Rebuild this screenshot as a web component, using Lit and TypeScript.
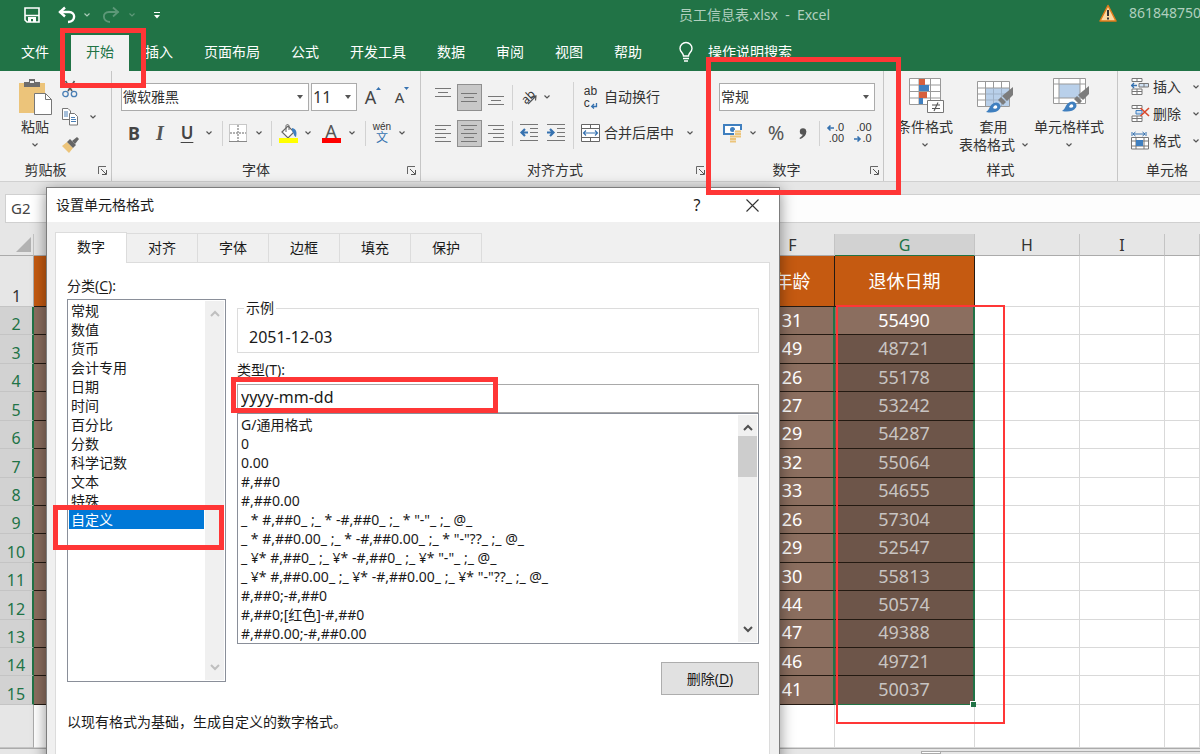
import { LitElement, html, svg, css, nothing } from "lit";
import { customElement, property, state } from "lit/decorators.js";
import { classMap } from "lit/directives/class-map.js";

const base = css`
  * { box-sizing: border-box; }
  button, select, input {
    font: inherit; color: inherit; margin: 0; padding: 0; border: 0;
    background: none; border-radius: 0; appearance: none; outline: none;
  }
  svg { display: block; flex: none; overflow: visible; }
`;

const icon = (w: number, h: number, body: unknown) =>
  html`<svg width=${w} height=${h} viewBox="0 0 ${w} ${h}" fill="none" aria-hidden="true">${body}</svg>`;

const chevron = (color = "#555") =>
  icon(6, 4, svg`<path d="M.5 .5L3 3L5.5 .5" stroke=${color} stroke-width="1.2"/>`);

const lines = (rows: number[][], h: number) =>
  icon(17, h, rows.map(([x, y, w]) => svg`<path d="M${x} ${y}.5h${w}" stroke="#777"/>`));

const brushStroke = svg`
  <path d="M36 9V17L30 23L25 18Z" fill="#7c7c7c"/>
  <path d="M24 19L29 24L26 27L21 22Z" fill="#7c7c7c"/>
  <path d="M9 34C13 32 12 27 17 25C21 23 25 27 23 30.500C20 35 14 35 9 34Z" fill="#3f7fbf"/>
  <path d="M17 28C19 26 21 28 20 30C19 31 17 31 16 30" fill="#fff"/>`;

const icons = {
  save: icon(16, 16, svg`<path d="M1 1H15V15H3L1 13Z" stroke="#fff" stroke-width="1.6"/><path d="M1 8.500H15" stroke="#fff" stroke-width="1.500"/><path d="M4 15V10H12V15H9V12H7V15Z" fill="#fff"/>`),
  undo: icon(18, 17, svg`<path d="M1.500 5H11C18 5 18 14.500 10 15" stroke="#fff" stroke-width="2.4"/><path d="M7 .5L2 5L7 9.500" stroke="#fff" stroke-width="2.4"/>`),
  redo: icon(18, 17, svg`<g stroke="#5d9878" stroke-width="1.800"><path d="M16.500 5H7C0 5 0 14.500 8 15"/><path d="M11 .5L16 5L11 9.500"/></g>`),
  more: icon(6, 7, svg`<path d="M0 .5H6" stroke="#fff"/><path d="M0 3H6L3 6.500Z" fill="#fff"/>`),
  warn: icon(18, 18, svg`<path d="M9 1.500L17 17H1Z" fill="#fbd9a0" stroke="#e07b1a" stroke-width="1.500" stroke-linejoin="round"/><path d="M9 6V12M9 13.500V15.500" stroke="#333" stroke-width="2"/>`),
  bulb: icon(14, 20, svg`<path d="M4.500 14C4.500 11 1 10 1 6.500A6 6 0 0 1 13 6.500C13 10 9.500 11 9.500 14Z" stroke="#fff" stroke-width="1.400"/><path d="M4 16.500H10M5 19H9" stroke="#fff" stroke-width="1.600"/>`),
  paste: icon(33, 36, svg`<path d="M0 4H26V34H0Z" fill="#ecc47a"/><path d="M5 3H10V0H16V3H21V8H5Z" fill="#6d6d6d"/><path d="M11 2H15V4H11Z" fill="#f2f2f2"/><path d="M15.500 14.500H26.500L32.500 20.500V35.500H15.500Z" fill="#fff" stroke="#777"/><path d="M26.500 14.500V20.500H32.500" stroke="#777"/>`),
  cut: icon(16, 17, svg`<path d="M3.500 0L10 10M12.500 0L6 10" stroke="#555" stroke-width="1.600"/><circle cx="3.500" cy="13" r="2.700" stroke="#4a7fb5" stroke-width="1.300"/><circle cx="12" cy="13" r="2.700" stroke="#4a7fb5" stroke-width="1.300"/>`),
  copy: icon(16, 18, svg`<path d="M.5 .5H6L8.500 3V11.500H.5Z" fill="#fff" stroke="#777"/><path d="M2 4H6M2 6H6M2 8H6" stroke="#4a7fb5"/><path d="M7.500 5.500H12.500L15.500 8.500V17H7.500Z" fill="#fff" stroke="#777"/><path d="M9 9.500H13M9 11.500H14M9 13.500H14" stroke="#4a7fb5"/>`),
  brush: icon(17, 16, svg`<path d="M0 9L5 5L11 11L7 16Z" fill="#ecc47a"/><path d="M5 5L8 2L14 8L11 11Z" fill="#666"/><path d="M10 4L15 0L17 2L13 7Z" fill="#666"/>`),
  caret: icon(6, 4, svg`<path d="M0 0H6L3 4Z" fill="#555"/>`),
  border: icon(18, 18, svg`<path d="M.5 .5H17.500V17.500H.5Z" fill="#fff" stroke="#999" stroke-dasharray="1 1"/><path d="M9 1V17M1 9H17" stroke="#999" stroke-width="1.500" stroke-dasharray="2 1"/><path d="M0 17.500H18" stroke="#888"/>`),
  fill: icon(19, 19, svg`<path d="M3 8L9 2L15 8L9 14Z" fill="#fff" stroke="#666" stroke-width="1.200"/><path d="M7 8V2C7 0 10 0 10 2V6" stroke="#666"/><path d="M13 4C18 5 18 9 17 13C15 13 15 9 13 7Z" fill="#3f7fbf"/><path d="M0 14H19V19H0Z" fill="#ff0"/>`),
  outdent: icon(18, 18, svg`<path d="M0 .5H18M10 4.500H18M10 8.500H18M10 12.500H18M0 16.500H18" stroke="#777"/><path d="M5 5L1.500 8.500L5 12M1.500 8.500H8" stroke="#3672b0" stroke-width="2.200"/>`),
  indent: icon(18, 18, svg`<path d="M0 .5H18M10 4.500H18M10 8.500H18M10 12.500H18M0 16.500H18" stroke="#777"/><path d="M3 5L6.500 8.500L3 12M6.500 8.500H0" stroke="#3672b0" stroke-width="2.200"/>`),
  merge: icon(19, 18, svg`<path d="M.5 .5H18.500V17.500H.5ZM.5 4.500H18.500M.5 13.500H18.500M9.500 .5V4.500M9.500 13.500V17.500" fill="#fff" stroke="#666"/><path d="M2.500 9H16.500M5 6.500L2.500 9L5 11.500M14 6.500L16.500 9L14 11.500" stroke="#3672b0" stroke-width="1.200"/>`),
  enter: icon(6, 6, svg`<path d="M5.500 0V3.500H1M3 1L.7 3.500L3 5.500" stroke="#3672b0" stroke-width="1.300"/>`),
  slant: icon(9, 9, svg`<path d="M0 9L8 1M3.500 1.500L8 1L7.500 5.500" stroke="#555" stroke-width="1.200"/>`),
  money: icon(19, 18, svg`<path d="M1 1H18V10H1Z" fill="#fff" stroke="#3f7fbf" stroke-width="2"/><circle cx="9.500" cy="5.500" r="2.500" fill="#3f7fbf"/><path d="M11 6H19V15H14V18H6V11H11Z" fill="#f2f2f2"/><path d="M12 7.500H18M12 10H18M12 12.500H18M7 12.500H13M7 15H13M7 17.500H13" stroke="#ecc47a" stroke-width="1.800"/>`),
  left: icon(7, 6, svg`<path d="M3.500 .5L1 3L3.500 5.500M1 3H7" stroke="#3672b0" stroke-width="1.600"/>`),
  right: icon(7, 6, svg`<path d="M3.500 .5L6 3L3.500 5.500M6 3H0" stroke="#3672b0" stroke-width="1.600"/>`),
  comma: icon(8, 11, svg`<circle cx="4" cy="3.500" r="3.200" fill="#555"/><path d="M7.200 3C7.500 7 5 9.500 1 11L.5 10C3 8.500 4.500 7 4 4Z" fill="#555"/>`),
  launcher: icon(9, 9, svg`<path d="M.5 8V.5H8" stroke="#666"/><path d="M3 3L8 8M8.500 4V8.500H4" stroke="#555"/>`),
  conditional: icon(36, 37, svg`<path d="M.5 .5H31.500V26.500H.5Z" fill="#fff"/><path d="M.5 .5H31.500V26.500H.5ZM.5 7H31.500M.5 13.500H31.500M.5 20H31.500M10 .5V26.500M21.500 .5V26.500" stroke="#999"/><path d="M10 1H16V7H10ZM10 14H18V20H10Z" fill="#d65f3d"/><path d="M10 7H20V13H10ZM10 20H14V26H10Z" fill="#3f7fbf"/><path d="M18.500 22.500H34.500V34.500H18.500Z" fill="#fff" stroke="#777"/><path d="M23 27H31M23 30.500H31M29 24.500L25 33" stroke="#555" stroke-width="1.100"/>`),
  tableFmt: icon(36, 37, svg`<path d="M.5 3.500H32.500V28.500H.5Z" fill="#fff"/><path d="M9 10H32V28H9Z" fill="#b9d0ea"/><path d="M.5 3.500H32.500V28.500H.5ZM.5 10H32.500M.5 16H8.500M.5 22H8.500M8.500 3.500V28.500M16.500 3.500V10M24.500 3.500V10" stroke="#999"/><path d="M9 16H32M9 22H32M16.500 10V28M24.500 10V28" stroke="#9fb2c8"/>${brushStroke}`),
  cellStyle: icon(36, 37, svg`<path d="M.5 .5H32.500V25.500H.5Z" fill="#fff"/><path d="M6 6H27V20H6Z" fill="#b9d0ea"/><path d="M.5 .5H32.500V25.500H.5ZM.5 6H32.500M.5 20H32.500M6 .5V25.500M27 .5V25.500" stroke="#999"/><g transform="translate(0 -1)">${brushStroke}</g>`),
  insert: icon(18, 17, svg`<path d="M1 .5H11V3.500H1ZM6 .5V3.500M1 11H11V16.500H1ZM6 11V16.500M1 13.500H11" fill="#fff" stroke="#777"/><path d="M8 5.500H17.500V9H8ZM13 5.500V9" fill="#cfe0f2" stroke="#777"/><path d="M0 7.500H6M3 5L.7 7.500L3 10" stroke="#3672b0" stroke-width="1.300"/>`),
  remove: icon(18, 17, svg`<path d="M1 .5H11V3.500H1ZM6 .5V3.500M1 11H11V16.500H1ZM6 11V16.500M1 13.500H11" fill="#fff" stroke="#777"/><path d="M5 5.500H11V9H5Z" fill="#cfe0f2" stroke="#3f7fbf"/><path d="M9.500 3L18 11M18 3L9.500 11" stroke="#d9482b" stroke-width="1.600"/>`),
  format: icon(18, 18, svg`<path d="M1 0V4M15 0V4M2 2H14M4.500 0L2 2L4.500 4M11.500 0L14 2L11.500 4" stroke="#3672b0"/><path d="M.5 5.500H17.500V17H.5ZM.5 9H17.500M.5 14H17.500M5 5.500V17M13 5.500V17" fill="#fff" stroke="#777"/><path d="M5 8H12V14H5Z" fill="#3f7fbf"/>`),
};

@customElement("excel-titlebar")
class ExcelTitlebar extends LitElement {
  @state() active = "开始";
  static styles = [base, css`
    :host { display: block; background: #217346; color: #fff; overflow: hidden; }
    .top { display: flex; align-items: center; height: 30px; padding-left: 24px; white-space: nowrap; }
    .quick { display: grid; grid-template-columns: 34px 18px 22px 26px 16px 34px; width: 655px; justify-items: center; align-items: center; }
    .quick button { display: flex; }
    .quick .save { justify-self: start; }
    .title { flex: 1; color: #b0cfbe; white-space: pre; }
    .account { display: flex; gap: 12px; align-items: center; width: 101px; height: 26px; color: #b0cfbe; align-self: start; }
    .tabs { display: flex; gap: 1px; height: 41px; padding: 5px 0 0 6px; align-items: stretch; }
    .tab { padding: 0 15px 2px; white-space: nowrap; }
    .tab.active { background: #f2f2f2; color: #217346; }
    .tab.first { margin-right: 6px; }
    .tell { display: flex; align-items: center; gap: 15px; margin-left: 21px; padding-bottom: 2px; white-space: nowrap; }
  `];
  render() {
    const tabs = ["文件", "开始", "插入", "页面布局", "公式", "开发工具", "数据", "审阅", "视图", "帮助"];
    return html`
      <div class="top">
        <div class="quick">
          <button class="save" aria-label="保存">${icons.save}</button>
          <button aria-label="撤消">${icons.undo}</button>
          <button aria-label="撤消选项">${chevron("#a9cbb8")}</button>
          <button aria-label="恢复">${icons.redo}</button>
          <button aria-label="恢复选项">${chevron("#5d9878")}</button>
          <button aria-label="自定义快速访问工具栏">${icons.more}</button>
        </div>
        <div class="title">员工信息表.xlsx  -  Excel</div>
        <div class="account">${icons.warn}<span>861848750</span></div>
      </div>
      <nav class="tabs">
        ${tabs.map((t, i) => html`<button class=${classMap({ tab: true, first: i === 0, active: t === this.active })} @click=${() => (this.active = t)}>${t}</button>`)}
        <button class="tell">${icons.bulb}<span>操作说明搜索</span></button>
      </nav>`;
  }
}

@customElement("excel-ribbon")
class ExcelRibbon extends LitElement {
  static styles = [base, css`
    :host { display: flex; height: 110px; background: #f2f2f2; color: #333; overflow: hidden; }
    button { display: flex; align-items: center; justify-content: center; white-space: nowrap; }
    .group { flex: none; display: flex; flex-direction: column; padding-top: 4px; border-right: 1px solid #c6c6c6; }
    .clip { width: 112px; } .font { width: 309px; } .align { width: 289px; } .number { width: 174px; }
    .styles { width: 234px; } .group.cells { flex: 1 0 98px; border: 0; padding-top: 2px; }
    .body { flex: 1; display: flex; }
    .foot { display: flex; align-items: center; height: 22px; }
    .foot span { flex: 1; text-align: center; }
    .foot button { width: 10px; height: 10px; margin: 0 4px 0 6px; }
    .rows { display: flex; flex-direction: column; gap: 8px; padding-top: 8px; }
    .row { display: grid; height: 28px; align-items: center; justify-items: center; }
    .sep { width: 1px; height: 25px; background: #d2d2d2; }
    .combo { display: grid; align-items: center; width: 100%; height: 28px; background: #fff; border: 1px solid #ababab; }
    .combo select, .combo svg { grid-area: 1 / 1; }
    .combo select { width: 100%; height: 26px; padding-left: 1px; color: #333; }
    .combo svg { justify-self: end; margin-right: 5px; pointer-events: none; }
    .combo.size { font-size: 16px; }
    .font .rows { padding-left: 9px; }
    .f1 { grid-template-columns: 188px 46px 28px 26px; gap: 2px; justify-content: start; }
    .f2 { grid-template-columns: 26px 26px 28px 16px 10px 22px 20px 4px 30px 10px 36px 6px 20px 14px 26px; }
    .b { font-size: 18px; font-weight: 700; color: #444; }
    .i { font-family: "Liberation Serif", serif; font-size: 20px; font-style: italic; font-weight: 700; color: #555; }
    .u { font-size: 17px; font-weight: 600; text-decoration: underline; text-decoration-thickness: 1px; color: #444; text-underline-offset: 3px; }
    .grow { font-size: 18px; color: #444; align-items: flex-start; }
    .shrink { font-size: 15px; color: #444; align-items: flex-start; }
    .colour { flex-direction: column; font-size: 18px; line-height: 14px; color: #555; width: 19px; border-bottom: 5px solid red; }
    .pinyin { flex-direction: column; font: 10px/10px "Liberation Sans", "Noto Sans CJK SC", sans-serif; }
    .pinyin b { font-size: 12px; line-height: 13px; font-weight: 400; color: #3672b0; }
    .align .rows.main { padding-left: 9px; }
    .a1 { grid-template-columns: 26px 27px 26px 7px 26px 10px; }
    .a2 { grid-template-columns: 26px 27px 26px 7px 26px 27px; }
    .on { width: 25px; height: 27px; background: #c8c8c8; border: 1px solid #8f8f8f; }
    .low { padding-top: 7px; } .high { padding-bottom: 9px; }
    .tall { width: 1px; height: 67px; margin: 7px 3px 0 4px; background: #d2d2d2; }
    .a3 { grid-template-columns: 27px 72px 28px; justify-items: start; }
    .a3 > :first-child, .a3 > :last-child { justify-self: center; }
    .wrap { flex-direction: column; align-items: flex-start; font: 12px/12px "Liberation Sans", sans-serif; }
    .wrap span { display: flex; gap: 1px; align-items: flex-end; height: 12px; }
    .orient { font-size: 12px; line-height: 12px; }
    .orient span { transform: rotate(-45deg); }
    .orient svg { margin: 4px 0 0 -7px; }
    .number .rows { padding-left: 9px; }
    .n1 { grid-template-columns: 156px; }
    .n2 { grid-template-columns: 26px 16px 30px 24px 8px 25px 30px; }
    .pct { font-size: 20px; color: #555; }
    .dec { flex-direction: column; align-items: flex-end; font: 11px/11px "Liberation Sans", sans-serif; }
    .dec span { display: flex; align-items: center; gap: 1px; }
    .styles .body { padding-left: 10px; }
    .big { flex-direction: column; justify-content: flex-start; line-height: 18px; }
    .big .pic { height: 43px; display: flex; align-items: center; }
    .styles .pic { padding-left: 3px; }
    .big .chev { height: 18px; display: flex; align-items: center; gap: 7px; }
    .w1 { width: 62px; } .w2 { width: 75px; } .w3 { width: 76px; }
    .cells .body { flex-direction: column; padding-left: 13px; }
    .cell { height: 27px; display: grid; grid-template-columns: 22px 40px 12px; justify-items: start; justify-content: start; }
    .clip .body { padding-left: 17px; }
    .paste { width: 36px; }
    .small { display: grid; grid-template-columns: 34px 12px; grid-template-rows: 28px 28px 27px; justify-items: center; align-items: center; }
    .small .brush { grid-row: 3; }
    .small .cut { grid-column: 1; }
  `];
  group(name: string, label: string, body: unknown, launcher = true) {
    return html`<section class="group ${name}">
      <div class="body">${body}</div>
      <div class="foot"><span>${label}</span>${launcher ? html`<button aria-label="${label}设置">${icons.launcher}</button>` : nothing}</div>
    </section>`;
  }
  chev(label: string) { return html`<button aria-label="${label}选项">${chevron()}</button>`; }
  render() {
    const sep = html`<i class="sep"></i>`;
    return html`
      ${this.group("clip", "剪贴板", html`
        <button class="big paste"><span class="pic">${icons.paste}</span><span>粘贴</span><span class="chev">${chevron()}</span></button>
        <div class="small">
          <button class="cut" aria-label="剪切">${icons.cut}</button><span></span>
          <button aria-label="复制">${icons.copy}</button>${this.chev("复制")}
          <button class="brush" aria-label="格式刷">${icons.brush}</button>
        </div>`)}
      ${this.group("font", "字体", html`<div class="rows">
        <div class="row f1">
          <label class="combo"><select aria-label="字体"><option>微软雅黑</option></select>${icons.caret}</label>
          <label class="combo size"><select aria-label="字号"><option>11</option></select>${icons.caret}</label>
          <button class="grow" aria-label="增大字号">A${icon(5, 3, svg`<path d="M0 3H5L2.500 0Z" fill="#3672b0"/>`)}</button>
          <button class="shrink" aria-label="减小字号">A${icon(5, 3, svg`<path d="M0 0H5L2.500 3Z" fill="#3672b0"/>`)}</button>
        </div>
        <div class="row f2">
          <button class="b">B</button><button class="i">I</button><button class="u">U</button>${this.chev("下划线")}${sep}
          <button aria-label="边框">${icons.border}</button>${this.chev("边框")}${sep}
          <button aria-label="填充颜色">${icons.fill}</button>${this.chev("填充")}
          <button class="colour" aria-label="字体颜色">A</button>${this.chev("颜色")}${sep}
          <button class="pinyin"><span>wén</span><b>文</b></button>${this.chev("拼音")}
        </div></div>`)}
      ${this.group("align", "对齐方式", html`
        <div class="rows main">
          <div class="row a1">
            <button class="high" aria-label="顶端对齐">${lines([[0, 0, 16], [3, 4, 10], [0, 8, 16]], 9)}</button>
            <button class="on" aria-label="垂直居中">${lines([[0, 0, 16], [3, 4, 10], [0, 8, 16]], 9)}</button>
            <button class="low" aria-label="底端对齐">${lines([[0, 0, 16], [3, 4, 10], [0, 8, 16]], 9)}</button>
            ${sep}<button class="orient" aria-label="方向"><span>ab</span>${icons.slant}</button>${this.chev("方向")}
          </div>
          <div class="row a2">
            <button aria-label="左对齐">${lines([[0, 0, 16], [0, 4, 11], [0, 8, 16], [0, 12, 11], [0, 16, 16]], 17)}</button>
            <button class="on" aria-label="居中">${lines([[0, 0, 16], [3, 4, 10], [0, 8, 16], [3, 12, 10], [0, 16, 16]], 17)}</button>
            <button aria-label="右对齐">${lines([[0, 0, 16], [5, 4, 11], [0, 8, 16], [5, 12, 11], [0, 16, 16]], 17)}</button>
            ${sep}<button aria-label="减少缩进量">${icons.outdent}</button><button aria-label="增加缩进量">${icons.indent}</button>
          </div>
        </div>
        <i class="tall"></i>
        <div class="rows">
          <div class="row a3"><button class="wrap" tabindex="-1" aria-label="换行"><span>ab</span><span>c${icons.enter}</span></button><button>自动换行</button><span></span></div>
          <div class="row a3">${icons.merge}<button>合并后居中</button>${this.chev("合并")}</div>
        </div>`)}
      ${this.group("number", "数字", html`<div class="rows">
        <div class="row n1"><label class="combo"><select aria-label="数字格式"><option>常规</option></select>${icons.caret}</label></div>
        <div class="row n2">
          <button aria-label="会计数字格式">${icons.money}</button>${this.chev("会计")}
          <button class="pct">%</button><button aria-label="千位分隔样式">${icons.comma}</button>${sep}
          <button class="dec"><span>${icons.left}.0</span><span>.00</span></button>
          <button class="dec"><span>.00</span><span>${icons.right}.0</span></button>
        </div></div>`)}
      ${this.group("styles", "样式", html`
        <button class="big w1"><span class="pic">${icons.conditional}</span><span>条件格式</span><span class="chev">${chevron()}</span></button>
        <button class="big w2"><span class="pic">${icons.tableFmt}</span><span>套用</span><span class="chev">表格格式${chevron()}</span></button>
        <button class="big w3"><span class="pic">${icons.cellStyle}</span><span>单元格样式</span><span class="chev">${chevron()}</span></button>`, false)}
      ${this.group("cells", "单元格", html`
        <button class="cell">${icons.insert}<span>插入</span>${chevron()}</button>
        <button class="cell">${icons.remove}<span>删除</span>${chevron()}</button>
        <button class="cell">${icons.format}<span>格式</span>${chevron()}</button>`, false)}`;
  }
}

@customElement("excel-sheet")
class ExcelSheet extends LitElement {
  static styles = [base, css`
    :host { display: flex; flex-direction: column; background: #fff; overflow: hidden; }
    .bar { flex: none; height: 53px; display: flex; align-items: center; gap: 8px; background: #e6e6e6; border-top: 1px solid #d0d0d0; padding: 12px 0 12px 5px; }
    .name { width: 100px; height: 29px; padding-left: 5px; background: #fff; border: 1px solid #d0d0d0; color: #444; font-size: 15px; }
    .formula { flex: 1; height: 29px; background: #fdfdfd; border: 1px solid #d0d0d0; border-right: 0; }
    table { flex: none; width: 100%; height: 514px; table-layout: fixed; border-spacing: 0; }
    .rh { width: 34px; } .first { width: 145px; } .hid { width: 143px; } .f { width: 84px; } .g { width: 140px; } .h { width: 105px; } .i { width: 85px; }
    th, td { padding: 0; text-align: center; font-weight: 400; }
    thead th { height: 22px; font-size: 16px; line-height: 20px; vertical-align: bottom; color: #333; background: #e6e6e6; border-right: 1px solid #c4c4c4; border-bottom: 1px solid #ababab; }
    thead th.sel { background: #d2d2d2; color: #217346; border-bottom: 1px solid #217346; }
    .corner { display: flex; justify-content: flex-end; padding: 0 2px 3px 0; }
    .num { font-size: 16px; line-height: 20px; vertical-align: bottom; color: #333; background: #e6e6e6; border-right: 1px solid #ababab; border-bottom: 1px solid #c4c4c4; }
    .num.sel { background: #d2d2d2; color: #217346; border-right: 2px solid #217346; }
    tbody td { border-right: 1px solid #d9d9d9; border-bottom: 1px solid #d9d9d9; }
    .head { height: 51px; }
    .head .fill { background: #c55a11; color: #fff; font-size: 18px; border-color: #241a12; }
    .data .fill { background: #8b6e5f; color: #fff; font-size: 18px; line-height: 20px; padding-bottom: 2px; border-color: #241a12; }
    .data .edge { border-right: 2px solid #217346; }
    .data .chosen { position: relative; background: #6d5549; color: #c8c4c2; border-right: 2px solid #217346; }
    .data .chosen.active { background: #8b6e5f; color: #fff; }
    .data.last .chosen { border-bottom: 1px solid #217346; }
    .handle { position: absolute; right: -3px; bottom: -3px; width: 6px; height: 6px; background: #217346; border: solid #fff; border-width: 1px 0 0 1px; }
    .blank { height: 43px; }
    .scroll { flex: 1; display: flex; background: #e6e6e6; border-top: 1px solid #ababab; padding: 2px 0 0 921px; }
    .scroll button { width: 20px; background: #fff; border: 1px solid #ababab; }
    .track { flex: 1; border-top: 1px solid #ababab; }
  `];
  rows: [number, number][] = [[31, 55490], [49, 48721], [26, 55178], [27, 53242], [29, 54287], [32, 55064], [33, 54655], [26, 57304], [29, 52547], [30, 55813], [44, 50574], [47, 49388], [46, 49721], [41, 50037]];
  render() {
    const pad = [0, 1, 2, 3, 4];
    return html`
      <div class="bar"><input class="name" aria-label="名称框" value="G2"><input class="formula" aria-label="编辑栏"></div>
      <table>
        <colgroup><col class="rh"><col class="first"><col class="hid"><col class="hid"><col class="hid"><col class="hid"><col class="f"><col class="g"><col class="h"><col class="i"><col></colgroup>
        <thead><tr>
          <th><span class="corner">${icon(15, 15, svg`<path d="M15 0V15H0Z" fill="#b2b2b2"/>`)}</span></th>
          ${pad.map(() => html`<th></th>`)}<th>F</th><th class="sel">G</th><th>H</th><th>I</th><th></th>
        </tr></thead>
        <tbody>
          <tr class="head"><th class="num">1</th>${pad.map(() => html`<td class="fill"></td>`)}<td class="fill">年龄</td><td class="fill">退休日期</td><td></td><td></td><td></td></tr>
          ${this.rows.map(([age, date], i) => html`<tr class=${classMap({ data: true, last: i === this.rows.length - 1 })}>
            <th class="num sel">${i + 2}</th>${pad.map(() => html`<td class="fill"></td>`)}
            <td class="fill edge">${age}</td>
            <td class=${classMap({ fill: true, chosen: true, active: i === 0 })}>${date}${i === this.rows.length - 1 ? html`<i class="handle"></i>` : nothing}</td>
            <td></td><td></td><td></td></tr>`)}
          <tr class="blank"><th class="num"></th>${pad.map(() => html`<td></td>`)}<td></td><td></td><td></td><td></td><td></td></tr>
        </tbody>
      </table>
      <div class="scroll"><button aria-label="向左滚动"></button><span class="track"></span></div>`;
  }
}

@customElement("format-dialog")
class FormatDialog extends LitElement {
  @property() format = "yyyy-mm-dd";
  @state() category = "自定义";
  @state() tab = "数字";
  static styles = [base, css`
    :host { display: flex; flex-direction: column; background: #f0f0f0; border: 1px solid #7d7d7d; box-shadow: 0 3px 14px rgba(0, 0, 0, .45); color: #1a1a1a; }
    header { display: flex; align-items: center; height: 34px; padding: 0 20px 0 9px; background: #fff; }
    header h1 { flex: 1; margin: 0; font-size: 14px; font-weight: 400; }
    .help { width: 14px; margin-right: 42px; font-size: 16px; }
    .close { padding: 0; }
    .tabs { display: flex; align-items: flex-end; height: 40px; padding-left: 8px; }
    .tab { width: 71px; height: 29px; background: #f0f0f0; border: 1px solid #dcdcdc; border-left: 0; border-bottom: 0; }
    .tab.active { width: 72px; height: 31px; background: #fff; border-left: 1px solid #dcdcdc; position: relative; bottom: -1px; padding-bottom: 2px; }
    .panel { flex: 1; display: grid; grid-template-columns: 159px 1fr; column-gap: 11px; align-content: start; margin: 0 9px 0 8px; padding: 11px 10px 0 11px; background: #fff; border: 1px solid #dcdcdc; }
    .caption { height: 24px; line-height: 24px; white-space: nowrap; }
    .list { display: grid; grid-template-columns: 1fr 20px; border: 1px solid #8a8f99; background: #fff; }
    .categories { height: 383px; margin-top: 1px; }
    .list ul { list-style: none; margin: 0; padding: 1px; overflow: hidden; }
    .list li { height: 19px; line-height: 19px; padding-left: 2px; white-space: pre; }
    .list li.on { background: #0078d7; color: #fff; }
    .bar { display: flex; flex-direction: column; align-items: center; justify-content: space-between; margin: 1px 1px 1px 0; padding: 9px 0; background: #f0f0f0; }
    .thumb { flex: none; align-self: stretch; height: 41px; margin: 5px 0 auto; background: #cdcdcd; }
    fieldset { height: 54px; min-width: 0; margin: 25px 0 0; padding: 0 0 0 11px; border: 1px solid #dcdcdc; }
    legend { margin-left: -5px; padding: 0 2px; line-height: 18px; }
    output { display: block; font-size: 16px; line-height: 22px; padding-top: 9px; }
    .kind { display: block; height: 22px; line-height: 22px; margin-top: 6px; }
    .type { display: block; width: 100%; height: 29px; padding: 0 0 4px 3px; font-size: 16px; border: 1px solid #a9a9a9; margin-top: 3px; }
    .formats { height: 231px; }
    .delete { display: block; width: 98px; height: 33px; margin: 18px 0 0 auto; background: #e1e1e1; border: 1px solid #adadad; }
    .note { margin: 15px 0 0; line-height: 24px; grid-column: 1 / 3; }
    u { text-underline-offset: 2px; }
  `];
  categories = ["常规", "数值", "货币", "会计专用", "日期", "时间", "百分比", "分数", "科学记数", "文本", "特殊", "自定义"];
  formats = ["G/通用格式", "0", "0.00", "#,##0", "#,##0.00",
    `_ * #,##0_ ;_ * -#,##0_ ;_ * "-"_ ;_ @_ `,
    `_ * #,##0.00_ ;_ * -#,##0.00_ ;_ * "-"??_ ;_ @_ `,
    `_ ¥* #,##0_ ;_ ¥* -#,##0_ ;_ ¥* "-"_ ;_ @_ `,
    `_ ¥* #,##0.00_ ;_ ¥* -#,##0.00_ ;_ ¥* "-"??_ ;_ @_ `,
    "#,##0;-#,##0", "#,##0;[红色]-#,##0", "#,##0.00;-#,##0.00"];
  arrow(up: boolean, color: string) {
    return icon(10, 7, svg`<path d=${up ? "M1 6L5 2L9 6" : "M1 1L5 5L9 1"} stroke=${color} stroke-width="2"/>`);
  }
  render() {
    return html`
      <header><h1>设置单元格格式</h1><button class="help" aria-label="帮助">?</button>
        <button class="close" aria-label="关闭">${icon(13, 13, svg`<path d="M.5 .5L12.500 12.500M12.500 .5L.5 12.500" stroke="#333" stroke-width="1.100"/>`)}</button></header>
      <div class="tabs">${["数字", "对齐", "字体", "边框", "填充", "保护"].map((t) => html`<button class=${classMap({ tab: true, active: t === this.tab })} @click=${() => (this.tab = t)}>${t}</button>`)}</div>
      <div class="panel">
        <div>
          <div class="caption" id="cat">分类(<u>C</u>):</div>
          <div class="list categories">
            <ul role="listbox" aria-labelledby="cat">${this.categories.map((c) => html`<li role="option" aria-selected=${c === this.category} class=${classMap({ on: c === this.category })} @click=${() => (this.category = c)}>${c}</li>`)}</ul>
            <div class="bar">${this.arrow(true, "#bfbfbf")}${this.arrow(false, "#bfbfbf")}</div>
          </div>
        </div>
        <div>
          <fieldset><legend>示例</legend><output>2051-12-03</output></fieldset>
          <label class="kind" for="type">类型(<u>T</u>):</label>
          <input class="type" id="type" .value=${this.format}>
          <div class="list formats">
            <ul role="listbox" aria-label="类型">${this.formats.map((f) => html`<li role="option" @click=${() => (this.format = f)}>${f}</li>`)}</ul>
            <div class="bar">${this.arrow(true, "#505050")}<i class="thumb"></i>${this.arrow(false, "#505050")}</div>
          </div>
          <button class="delete">删除(<u>D</u>)</button>
        </div>
        <p class="note">以现有格式为基础，生成自定义的数字格式。</p>
      </div>`;
  }
}

@customElement("app-root")
class AppRoot extends LitElement {
  static styles = [base, css`
    :host {
      display: flex; flex-direction: column; position: relative; height: 100vh; overflow: hidden;
      font: 14px/20px "Noto Sans", "Noto Sans CJK SC", sans-serif;
    }
    excel-titlebar, excel-ribbon { flex: none; }
    excel-sheet { flex: 1; min-height: 0; }
    .dialog { position: absolute; left: 46px; top: 187px; width: 734px; height: 640px; }
    .mark { position: absolute; border: 5px solid #ff3636; pointer-events: none; }
    .m-tab { left: 60px; top: 28px; width: 86px; height: 60px; }
    .m-number { left: 706px; top: 57px; width: 195px; height: 138px; }
    .m-type { left: 231px; top: 377px; width: 267px; height: 36px; }
    .m-custom { left: 53px; top: 505px; width: 171px; height: 45px; }
    .m-column { left: 836px; top: 305px; width: 169px; height: 419px; border-width: 2px; }
  `];
  render() {
    return html`
      <excel-titlebar></excel-titlebar>
      <excel-ribbon></excel-ribbon>
      <excel-sheet></excel-sheet>
      <format-dialog class="dialog" role="dialog" aria-label="设置单元格格式"></format-dialog>
      ${["m-tab", "m-number", "m-type", "m-custom", "m-column"].map((m) => html`<i class="mark ${m}"></i>`)}`;
  }
}
